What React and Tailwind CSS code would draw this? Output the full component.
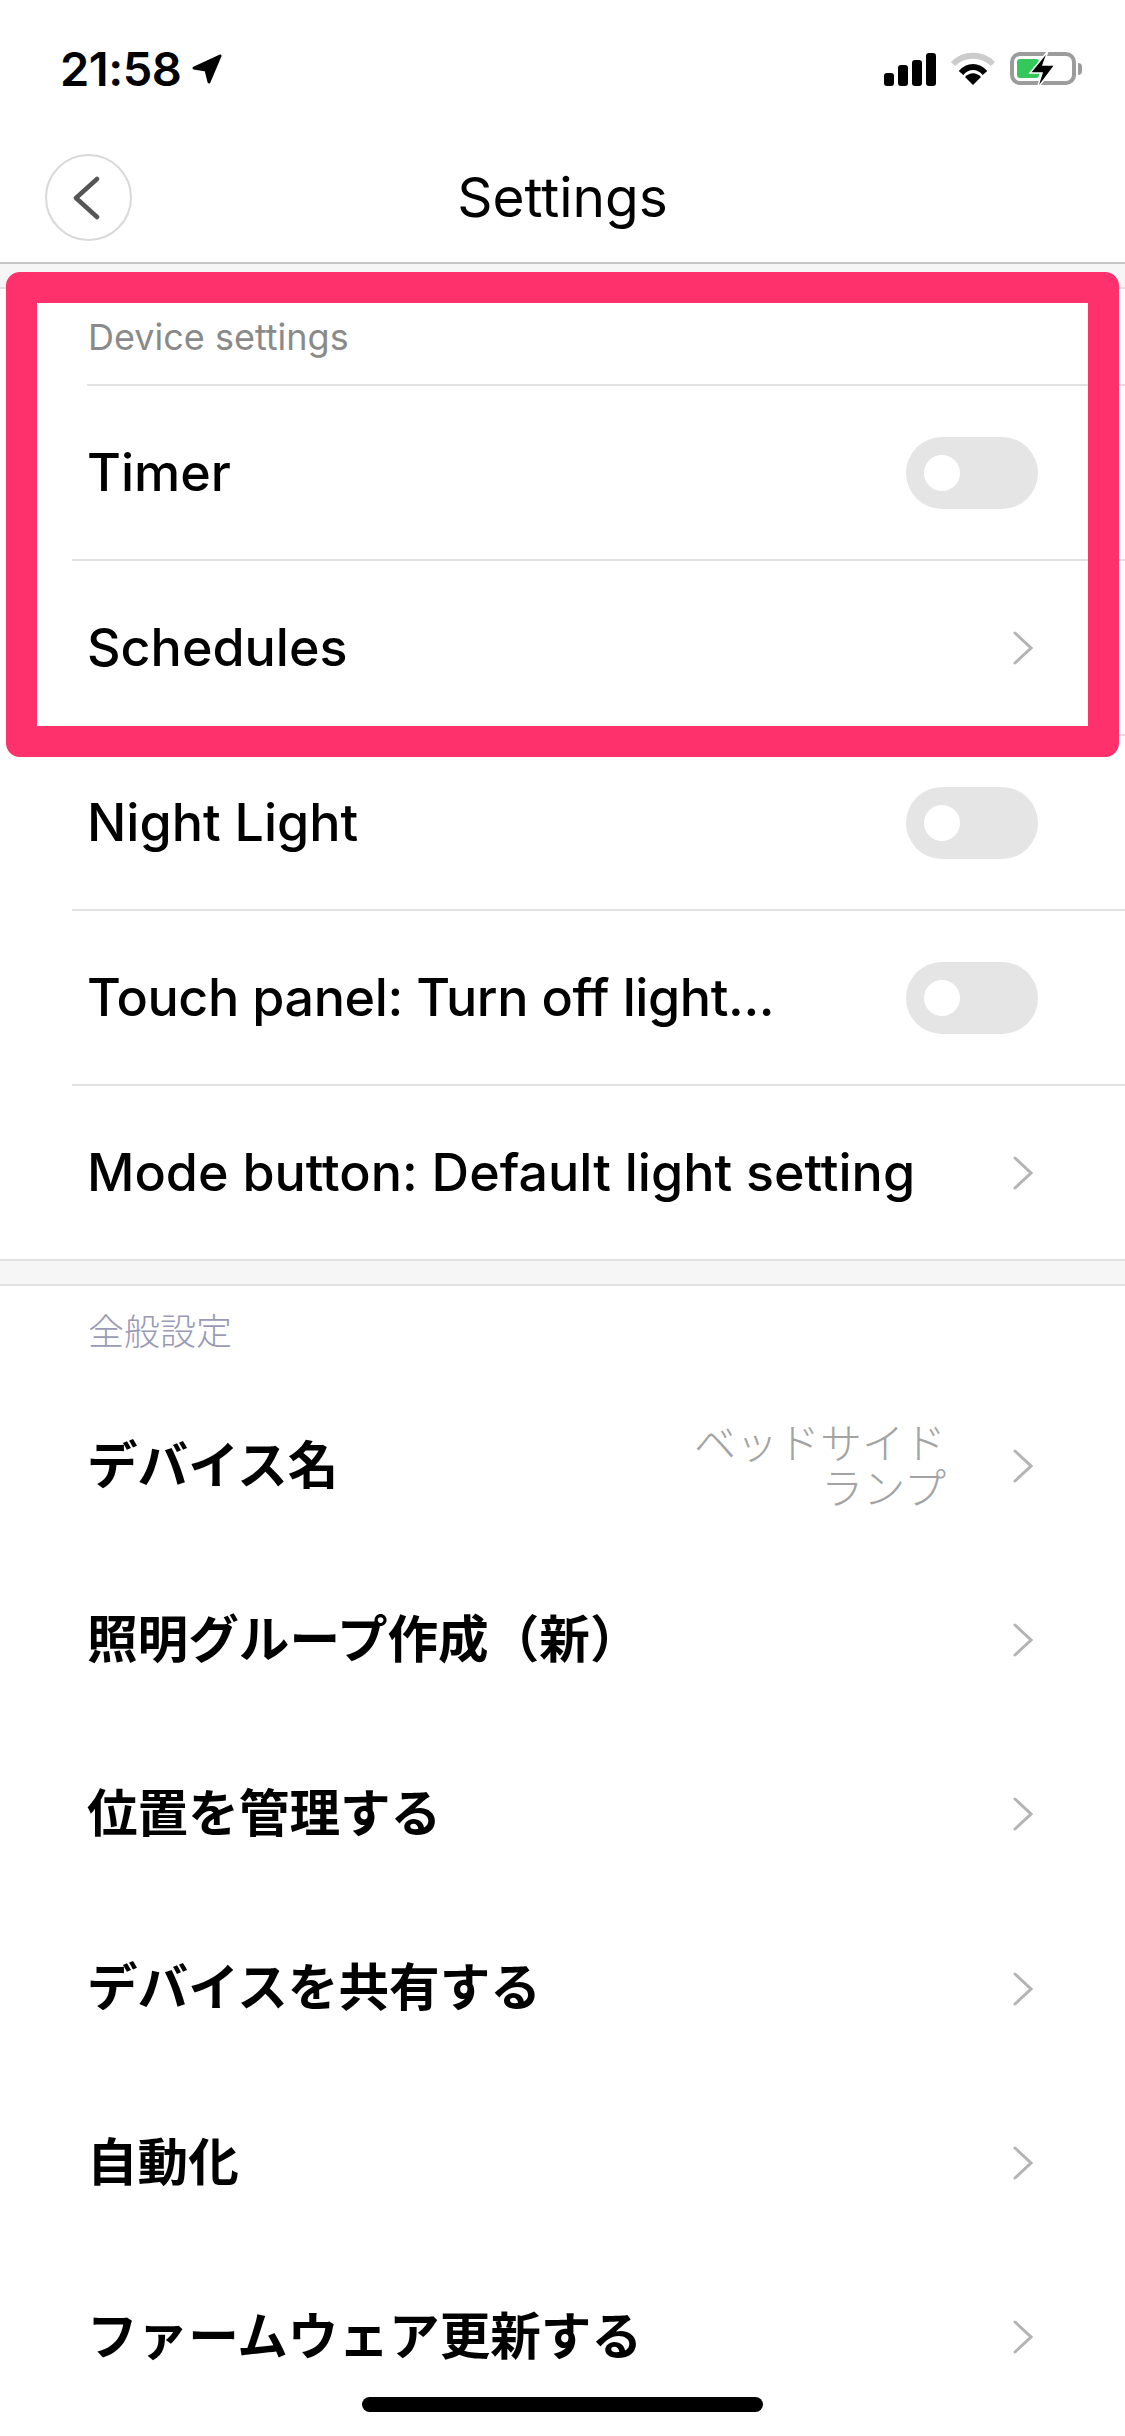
import React from 'react';

const LATIN = "font-['Inter','Noto_Sans_CJK_JP',sans-serif]";
const CJK = "font-['Noto_Sans_CJK_JP',sans-serif]";

const Chevron = () => (
  <svg width="20" height="34" viewBox="0 0 20 34" fill="none" className="block shrink-0">
    <path d="M2 2 L18 17 L2 32" stroke="#b4b4b4" strokeWidth="3" strokeLinecap="round" strokeLinejoin="miter" />
  </svg>
);

const Toggle = () => (
  <div className="flex h-[72px] w-[132px] items-center rounded-full bg-[#e5e5e5] pl-[18px]">
    <div className="h-[36px] w-[36px] rounded-full bg-white" />
  </div>
);

const StatusBar = () => (
  <div className="flex h-[133px] items-start justify-between pt-[46px] pl-[60px] pr-[43px]">
    <div className="flex items-center">
      <span className={`${LATIN} text-[47px] leading-[46px] font-semibold tracking-[-0.5px] text-black`}>21:58</span>
      <svg width="32" height="32" viewBox="0 0 32 32" className="ml-[10px]">
        <path d="M29 3 L3 15 L15 17 L18 29 Z" fill="#000" stroke="#000" strokeWidth="3" strokeLinejoin="round" />
      </svg>
    </div>
    <div className="flex items-start pt-[6px]">
      <svg width="52" height="34" viewBox="0 0 52 34" className="mr-[14px] block">
        <rect x="0" y="21" width="10" height="13" rx="3" fill="#000" />
        <rect x="14" y="13" width="10" height="21" rx="3" fill="#000" />
        <rect x="28" y="8" width="10" height="26" rx="3" fill="#000" />
        <rect x="42" y="1" width="10" height="33" rx="3" fill="#000" />
      </svg>
      <svg width="46" height="34" viewBox="0 0 46 34" className="mr-[14px] block">
        <path d="M3 12 C14 1 32 1 43 12" stroke="#cccccc" strokeWidth="6" fill="none" />
        <path d="M11 21 C18 13 28 13 35 21" stroke="#000" strokeWidth="6" fill="none" />
        <path d="M15 25 L23 33 L31 25 C26 20 20 20 15 25 Z" fill="#000" />
      </svg>
      <div className="relative flex items-center">
        <div className="h-[33px] w-[66px] rounded-[10px] border-[4px] border-[#9c9c9c] p-[3px]">
          <div className="h-full w-[22px] rounded-[3px] bg-[#34c759]" />
        </div>
        <div className="ml-[2px] h-[12px] w-[4px] rounded-r-full bg-[#9c9c9c]" />
        <svg width="30" height="42" viewBox="0 0 30 42" className="absolute left-[18px] top-[-3px]">
          <path d="M20 2 L2 24 L14 24 L9 40 L27 16 L15 16 Z" fill="#000" stroke="#fff" strokeWidth="1.5" strokeLinejoin="miter" />
        </svg>
      </div>
    </div>
  </div>
);

const NavBar = () => (
  <div className="grid h-[131px] grid-cols-[1fr_auto_1fr] items-center border-b-2 border-[#c6c6c6] px-[45px]">
    <div className="flex h-[87px] w-[87px] items-center justify-center rounded-full border-2 border-[#d9d9d9]">
      <svg width="28" height="44" viewBox="0 0 28 44" className="mr-[6px] block">
        <path d="M25 3 L4 22 L25 41" stroke="#555" strokeWidth="4.5" fill="none" strokeLinecap="round" strokeLinejoin="round" />
      </svg>
    </div>
    <div className={`${LATIN} text-[55px] leading-none font-normal text-black`}>Settings</div>
    <div />
  </div>
);

const SectionGap = () => <div className="h-[25px] border-b-2 border-[#e2e2e2] bg-[#f6f6f6]" />;

const Row = ({ label, cjk, right, value }) => (
  <div className={`flex items-center justify-between pl-[87px] pr-[92px] ${cjk ? 'h-[174.2px]' : 'h-[173px]'}`}>
    <span className={cjk ? `${CJK} pb-[8px] text-[50.6px] leading-none font-bold text-black` : `${LATIN} text-[52px] leading-none font-[450] text-black`}>
      {label}
    </span>
    <div className="flex items-center">
      {value && (
        <div className={`${CJK} mr-[67px] pb-[7px] text-right text-[42px] leading-[45px] font-light text-[#a3a3a3]`}>
          ベッドサイド
          <br />
          ランプ
        </div>
      )}
      {right === 'toggle' ? <div className="-mr-[5px]"><Toggle /></div> : <Chevron />}
    </div>
  </div>
);

const Divider = ({ indent = 'ml-[72px]' }) => <div className={`h-[2px] bg-[#e2e2e2] ${indent}`} />;

export default function App() {
  return (
    <div className="relative h-[2436px] w-[1125px] overflow-hidden bg-white">
      <StatusBar />
      <NavBar />
      <SectionGap />

      <div className="flex h-[95px] items-center pl-[88px]">
        <span className={`${LATIN} text-[36px] leading-none font-normal text-[#8a8a8a]`}>Device settings</span>
      </div>
      <Divider indent="ml-[87px]" />
      <Row label="Timer" right="toggle" />
      <Divider />
      <Row label="Schedules" right="chevron" />
      <Divider />
      <Row label="Night Light" right="toggle" />
      <Divider />
      <Row label={<span className="tracking-[-0.4px]">Touch panel: Turn off light...</span>} right="toggle" />
      <Divider />
      <Row label="Mode button: Default light setting" right="chevron" />
      <Divider indent="ml-0" />
      <SectionGap />

      <div className="flex h-[93px] items-center pb-[8px] pl-[88px]">
        <span className={`${CJK} text-[36px] leading-none font-light text-[#9a9ab5]`}>全般設定</span>
      </div>
      <Row label="デバイス名" cjk right="chevron" value />
      <Row label="照明グループ作成（新）" cjk right="chevron" />
      <Row label="位置を管理する" cjk right="chevron" />
      <Row label="デバイスを共有する" cjk right="chevron" />
      <Row label="自動化" cjk right="chevron" />
      <Row label="ファームウェア更新する" cjk right="chevron" />

      {/* annotation frame drawn over the list */}
      <div className="pointer-events-none absolute left-[6px] top-[272px] h-[485px] w-[1113px] rounded-[14px] border-[31px] border-[#ff316d]" />
      {/* home indicator */}
      <div className="absolute bottom-[24px] left-[362px] h-[15px] w-[401px] rounded-full bg-black" />
    </div>
  );
}
